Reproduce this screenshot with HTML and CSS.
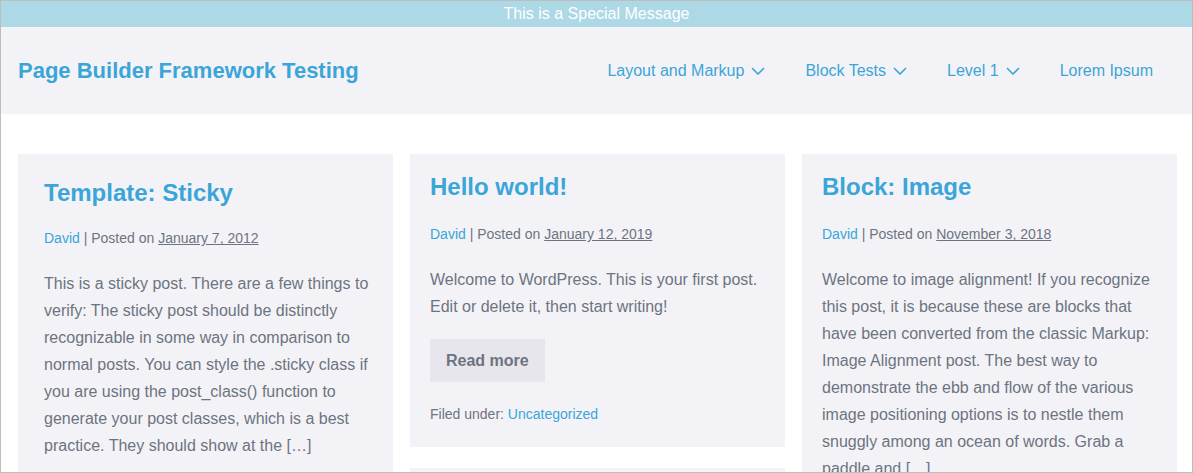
FILE: index.html
```html
<!DOCTYPE html>
<html lang="en">
<head>
  <meta charset="UTF-8">
  <meta name="viewport" content="width=device-width, initial-scale=1.0">
  <title>Page Builder Framework Testing</title>
  <link rel="stylesheet" href="styles.css">
</head>
<body>
<div class="frame">

  <div class="notice">This is a Special Message</div>

  <header class="site-header">
    <a class="site-title" href="#">Page Builder Framework Testing</a>
    <nav class="menu">
      <a href="#">Layout and Markup
        <svg class="chev" viewBox="0 0 14 8"><polyline points="1,1 7,7 13,1"/></svg></a>
      <a href="#">Block Tests
        <svg class="chev" viewBox="0 0 14 8"><polyline points="1,1 7,7 13,1"/></svg></a>
      <a href="#">Level 1
        <svg class="chev" viewBox="0 0 14 8"><polyline points="1,1 7,7 13,1"/></svg></a>
      <a href="#">Lorem Ipsum</a>
    </nav>
  </header>

  <main class="posts">

    <div class="column">
      <article class="post sticky">
        <h2><a href="#">Template: Sticky</a></h2>
        <p class="meta"><a href="#">David</a> | Posted on <span class="date">January 7, 2012</span></p>
        <p>This is a sticky post. There are a few things to verify: The sticky post should be distinctly recognizable in some way in comparison to normal posts. You can style the .sticky class if you are using the post_class() function to generate your post classes, which is a best practice. They should show at the […]</p>
        <a class="more" href="#">Read more</a>
        <p class="meta">Filed under: <a href="#">Uncategorized</a></p>
      </article>
    </div>

    <div class="column">
      <article class="post">
        <h2><a href="#">Hello world!</a></h2>
        <p class="meta"><a href="#">David</a> | Posted on <span class="date">January 12, 2019</span></p>
        <p>Welcome to WordPress. This is your first post. Edit or delete it, then start writing!</p>
        <a class="more" href="#">Read more</a>
        <p class="meta">Filed under: <a href="#">Uncategorized</a></p>
      </article>
      <article class="post">
        <h2><a href="#">Block: Gallery</a></h2>
        <p class="meta"><a href="#">David</a> | Posted on <span class="date">November 2, 2018</span></p>
        <p>Gallery blocks have two settings: the number of columns, and whether or not images should be cropped.</p>
      </article>
    </div>

    <div class="column">
      <article class="post">
        <h2><a href="#">Block: Image</a></h2>
        <p class="meta"><a href="#">David</a> | Posted on <span class="date">November 3, 2018</span></p>
        <p>Welcome to image alignment! If you recognize this post, it is because these are blocks that have been converted from the classic Markup: Image Alignment post. The best way to demonstrate the ebb and flow of the various image positioning options is to nestle them snuggly among an ocean of words. Grab a paddle and […]</p>
        <a class="more" href="#">Read more</a>
        <p class="meta">Filed under: <a href="#">Uncategorized</a></p>
      </article>
    </div>

  </main>

</div>
</body>
</html>
```

FILE: styles.css
```css
body {
  margin: 0;
  font-family: "Liberation Sans", Arial, sans-serif;
  font-size: 16px;
  color: #6d7380;
  background-color: #fff;
}

a {
  color: #3ba5d8;
  text-decoration: none;
}

.frame {
  height: 473px;
  box-sizing: border-box;
  border: 1px solid #bdbdbd;
  overflow: hidden;
}

.notice {
  background-color: #add8e6;
  color: #fff;
  text-align: center;
  height: 26px;
  line-height: 26px;
}

.site-header {
  background-color: #f3f3f7;
  height: 87px;
  padding: 0 17px;
  display: flex;
  align-items: center;
  justify-content: space-between;
}

.site-title {
  font-size: 22px;
  font-weight: bold;
}

.menu {
  display: flex;
  margin-right: 2px;
}

.menu a {
  padding: 0 20px;
  display: flex;
  align-items: center;
  gap: 7px;
}

.chev {
  width: 14px;
  height: 8px;
  fill: none;
  stroke: #3ba5d8;
  stroke-width: 1.6;
}

.posts {
  padding: 40px 15px 0 17px;
  display: flex;
  gap: 17px;
}

.column {
  flex: 1;
  display: flex;
  flex-direction: column;
  gap: 21px;
}

.post {
  background-color: #f3f3f7;
  padding: 20px 20px 22px;
}

.post.sticky {
  padding: 26px 22px 26px 26px;
}

.post h2 {
  margin: 0 0 24px;
  font-size: 24px;
  line-height: 1.1;
}

.post.sticky h2 {
  margin-bottom: 22px;
}

.post p {
  margin: 0 0 19px;
  line-height: 27px;
}

.post p.meta {
  font-size: 14px;
  line-height: 21px;
  margin-bottom: 21px;
}

.post p.meta:last-child {
  margin-bottom: 0;
}

.date {
  text-decoration: underline;
}

.more {
  display: inline-block;
  background-color: #e6e6ec;
  color: #6d7380;
  font-weight: bold;
  line-height: 27px;
  padding: 8px 16px;
  margin-bottom: 22px;
}
```
